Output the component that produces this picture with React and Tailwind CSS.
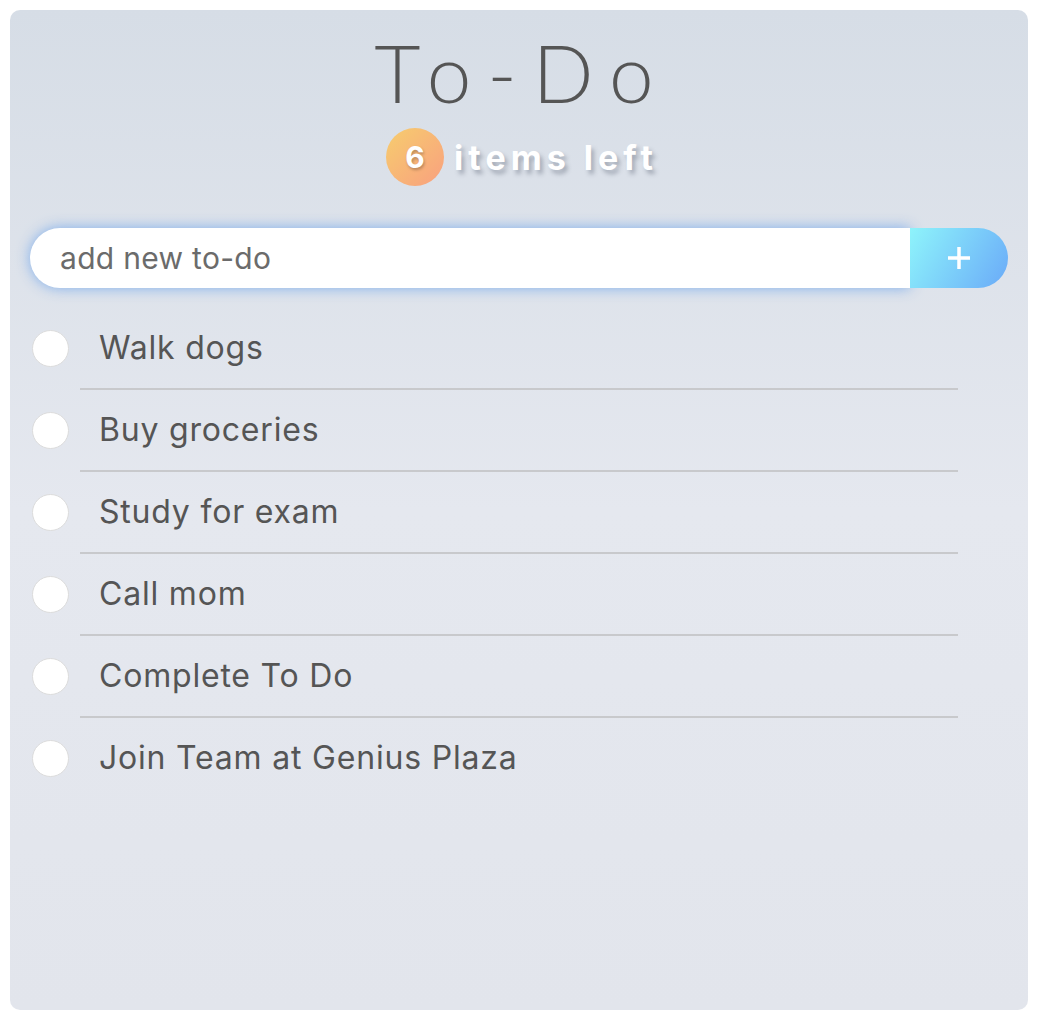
const items = [
  "Walk dogs",
  "Buy groceries",
  "Study for exam",
  "Call mom",
  "Complete To Do",
  "Join Team at Genius Plaza",
];

export default function App() {
  return (
    <div className="bg-white p-[10px]">
      <div className="h-[1000px] w-[1018px] rounded-[10px] bg-[linear-gradient(180deg,#d6dde6_0%,#e5e8ef_50%,#e2e5ec_100%)] px-[20px] pt-[14px]">
        <h1 className="pl-[6px] text-center font-['Lato',sans-serif] text-[80px] font-light leading-[96px] tracking-[16px] text-[#555555]">
          To-Do
        </h1>
        <div className="mt-[8px] flex items-center justify-center gap-[10px] pl-[6px]">
          <div className="flex h-[58px] w-[58px] items-center justify-center rounded-full bg-[linear-gradient(135deg,#f6cd6e_0%,#f9a07f_100%)] font-['Inter',sans-serif] text-[30px] font-bold text-white [text-shadow:1px_2px_3px_rgba(0,0,0,0.25)]">
            6
          </div>
          <span className="font-['Inter',sans-serif] text-[34px] font-bold tracking-[5px] text-white [text-shadow:3px_4px_4px_rgba(60,70,90,0.35)]">
            items left
          </span>
        </div>
        <div className="mt-[42px] flex h-[60px] items-stretch">
          <div className="flex flex-1 items-center rounded-l-full bg-white pl-[30px] shadow-[0_0_14px_rgba(110,165,235,0.85)]">
            <span className="font-['Inter',sans-serif] text-[30px] tracking-[0.3px] text-[#6b6b6b]">
              add new to-do
            </span>
          </div>
          <div className="flex w-[98px] items-center justify-center rounded-r-full bg-[linear-gradient(120deg,#8ef4fb_0%,#6aaaf8_100%)]">
            <svg width="26" height="26" viewBox="0 0 26 26">
              <path d="M13 2v22M2 13h22" stroke="white" strokeWidth="3.5" strokeLinecap="butt" />
            </svg>
          </div>
        </div>
        <ul className="mt-[20px]">
          {items.map((t, i) => (
            <li key={t}>
              <div className="flex h-[80px] items-center">
                <div className="ml-[2px] h-[37px] w-[37px] rounded-full border border-[#dcdcdc] bg-white" />
                <span className="ml-[30px] font-['Inter',sans-serif] text-[32px] tracking-[0.8px] text-[#555555]">
                  {t}
                </span>
              </div>
              {i < items.length - 1 && (
                <div className="ml-[50px] mr-[50px] h-[2px] bg-[#c8c9cc]" />
              )}
            </li>
          ))}
        </ul>
      </div>
    </div>
  );
}
